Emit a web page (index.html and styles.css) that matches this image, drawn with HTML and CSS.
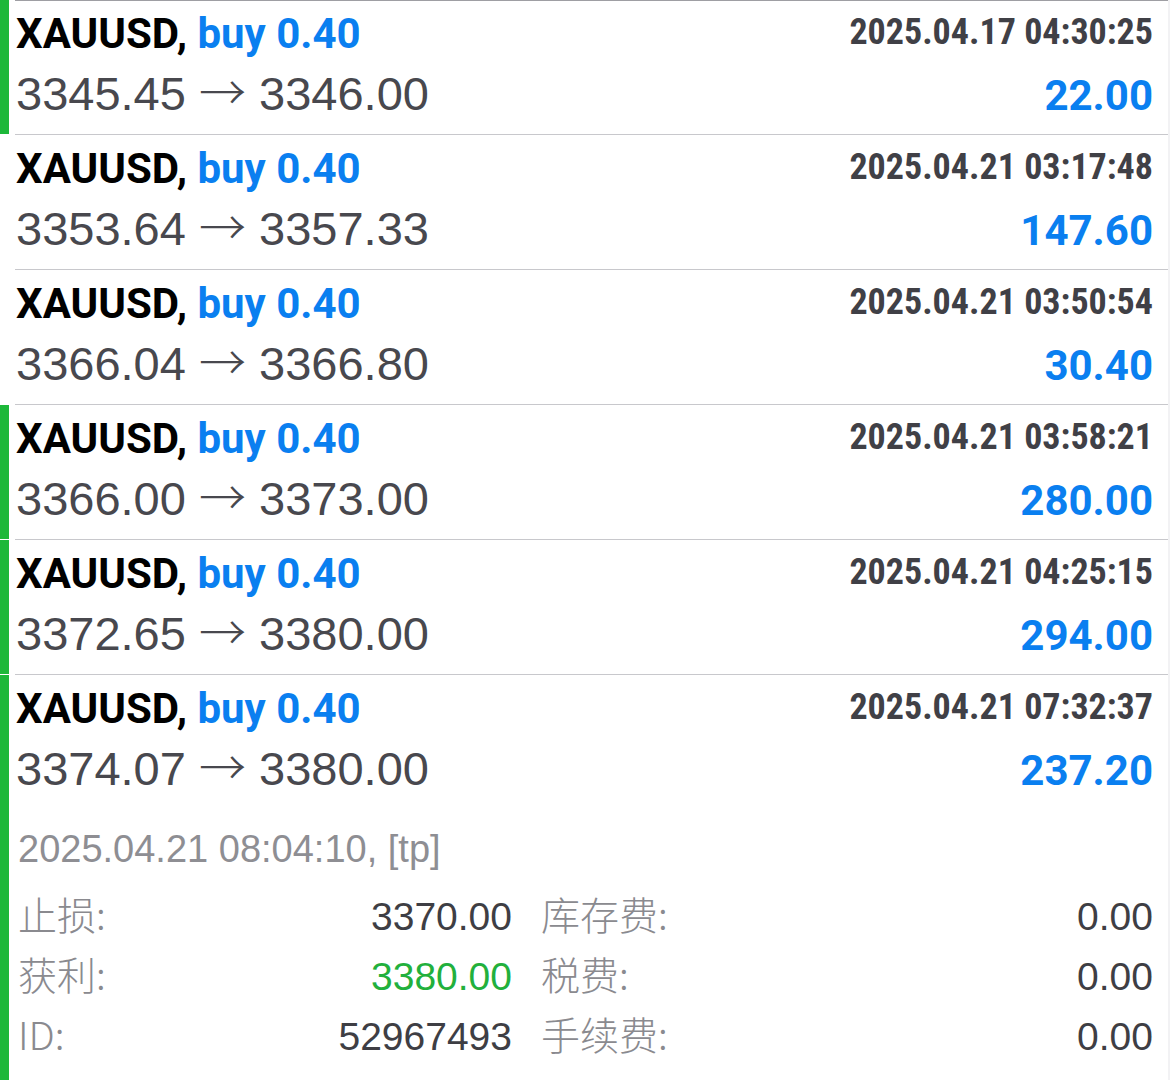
FILE: index.html
```html
<!DOCTYPE html>
<html lang="zh">

<head>
    <meta charset="UTF-8">
    <meta name="viewport" content="width=device-width, initial-scale=1.0">
    <title>History</title>
    <link rel="stylesheet" href="styles.css">
</head>

<body>
    <div class="deals">

        <div class="deal marked">
            <div class="bar"></div>
            <div class="body">
                <div class="line">
                    <span class="symbol">XAUUSD, <span class="side">buy 0.40</span></span>
                    <span class="time">2025.04.17 04:30:25</span>
                </div>
                <div class="line">
                    <span class="prices">3345.45 <span class="arrow">→</span> 3346.00</span>
                    <span class="profit">22.00</span>
                </div>
            </div>
        </div>

        <div class="deal">
            <div class="bar"></div>
            <div class="body">
                <div class="line">
                    <span class="symbol">XAUUSD, <span class="side">buy 0.40</span></span>
                    <span class="time">2025.04.21 03:17:48</span>
                </div>
                <div class="line">
                    <span class="prices">3353.64 <span class="arrow">→</span> 3357.33</span>
                    <span class="profit">147.60</span>
                </div>
            </div>
        </div>

        <div class="deal">
            <div class="bar"></div>
            <div class="body">
                <div class="line">
                    <span class="symbol">XAUUSD, <span class="side">buy 0.40</span></span>
                    <span class="time">2025.04.21 03:50:54</span>
                </div>
                <div class="line">
                    <span class="prices">3366.04 <span class="arrow">→</span> 3366.80</span>
                    <span class="profit">30.40</span>
                </div>
            </div>
        </div>

        <div class="deal marked">
            <div class="bar"></div>
            <div class="body">
                <div class="line">
                    <span class="symbol">XAUUSD, <span class="side">buy 0.40</span></span>
                    <span class="time">2025.04.21 03:58:21</span>
                </div>
                <div class="line">
                    <span class="prices">3366.00 <span class="arrow">→</span> 3373.00</span>
                    <span class="profit">280.00</span>
                </div>
            </div>
        </div>

        <div class="deal marked">
            <div class="bar"></div>
            <div class="body">
                <div class="line">
                    <span class="symbol">XAUUSD, <span class="side">buy 0.40</span></span>
                    <span class="time">2025.04.21 04:25:15</span>
                </div>
                <div class="line">
                    <span class="prices">3372.65 <span class="arrow">→</span> 3380.00</span>
                    <span class="profit">294.00</span>
                </div>
            </div>
        </div>

        <div class="deal marked open">
            <div class="bar"></div>
            <div class="body">
                <div class="line">
                    <span class="symbol">XAUUSD, <span class="side">buy 0.40</span></span>
                    <span class="time">2025.04.21 07:32:37</span>
                </div>
                <div class="line">
                    <span class="prices">3374.07 <span class="arrow">→</span> 3380.00</span>
                    <span class="profit">237.20</span>
                </div>

                <div class="closed">2025.04.21 08:04:10, [tp]</div>

                <div class="details">
                    <div class="pair">
                        <span class="label">止损:</span>
                        <span class="value">3370.00</span>
                    </div>
                    <div class="pair">
                        <span class="label">库存费:</span>
                        <span class="value">0.00</span>
                    </div>
                    <div class="pair">
                        <span class="label">获利:</span>
                        <span class="value tp">3380.00</span>
                    </div>
                    <div class="pair">
                        <span class="label">税费:</span>
                        <span class="value">0.00</span>
                    </div>
                    <div class="pair">
                        <span class="label">ID:</span>
                        <span class="value">52967493</span>
                    </div>
                    <div class="pair">
                        <span class="label">手续费:</span>
                        <span class="value">0.00</span>
                    </div>
                </div>
            </div>
        </div>

    </div>
</body>

</html>
```

FILE: styles.css
```css
body {
    margin: 0;
    background-color: #fff;
    font-family: "Liberation Sans", Arial, sans-serif;
    overflow: hidden;
}

.deals {
    width: 1168px;
    border-right: 2px solid #f2f2f4;
}

.deal {
    display: flex;
}

.bar {
    width: 9px;
    flex-shrink: 0;
    margin-bottom: 1px;
}

.marked .bar {
    background: #1db83a;
}

.body {
    flex: 1;
    min-width: 0;
    margin-left: 6px;
    padding: 3px 15px 0 1px;
    height: 131px;
    border-bottom: 1px solid #c8c8cc;
}

.deal:first-child .body {
    border-top: 1px solid #9e9ea3;
    padding-top: 2px;
}

.open .body {
    height: auto;
    padding-bottom: 40px;
    border-bottom: none;
}

.line {
    display: flex;
    justify-content: space-between;
    align-items: baseline;
    height: 56px;
    line-height: 61px;
}

.symbol {
    font-family: Roboto, sans-serif;
    font-weight: bold;
    font-size: 42px;
    color: #000;
}

.side {
    color: #0a7ff0;
}

.time {
    align-self: flex-start;
    line-height: 58px;
    font-family: Roboto, sans-serif;
    font-weight: bold;
    font-stretch: 87%;
    font-size: 36px;
    color: #404046;
}

.prices {
    font-size: 47px;
    color: #48484e;
}

.arrow {
    font-family: "Noto Sans CJK SC", sans-serif;
    font-weight: 300;
}

.profit {
    font-family: Roboto, sans-serif;
    font-weight: bold;
    font-size: 42px;
    color: #0a7ff0;
}

.closed {
    margin-top: 29px;
    padding-left: 2px;
    font-size: 38px;
    color: #8e8e93;
    line-height: 60px;
}

.details {
    display: grid;
    grid-template-columns: 494px 1fr;
    column-gap: 29px;
    margin-top: 6px;
    padding-left: 2px;
}

.pair {
    display: flex;
    justify-content: space-between;
    align-items: baseline;
    height: 60px;
}

.label {
    font-family: "Noto Sans CJK SC", sans-serif;
    font-weight: 300;
    font-size: 39px;
    color: #8a8a8f;
}

.value {
    font-size: 39px;
    color: #3e3e44;
}

.value.tp {
    color: #22b03c;
}
```
